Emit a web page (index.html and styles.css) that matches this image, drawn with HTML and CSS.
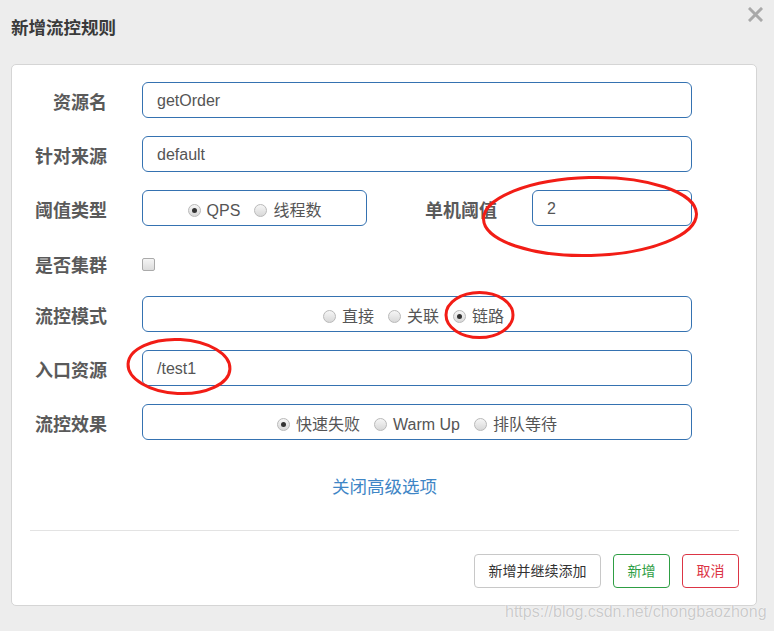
FILE: index.html
```html
<!DOCTYPE html>
<html lang="zh-CN">
<head>
<meta charset="utf-8">
<title>新增流控规则</title>
<link rel="stylesheet" href="styles.css">
</head>
<body>
<div class="page">
  <div class="header">
    <h4 class="title">新增流控规则</h4>
    <svg class="close" width="15" height="15" viewBox="0 0 15 15"><path d="M2 2 L13 13 M13 2 L2 13" stroke="#a9a9a9" stroke-width="3" stroke-linecap="square"/></svg>
  </div>
  <div class="card">
    <div class="form">
      <div class="row">
        <label class="lbl">资源名</label>
        <div class="input wide">getOrder</div>
      </div>
      <div class="row">
        <label class="lbl">针对来源</label>
        <div class="input wide">default</div>
      </div>
      <div class="row">
        <label class="lbl">阈值类型</label>
        <div class="box narrow">
          <span class="opt"><span class="radio on"></span>QPS</span>
          <span class="opt"><span class="radio"></span>线程数</span>
        </div>
        <label class="lbl lbl2">单机阈值</label>
        <div class="input small">2</div>
      </div>
      <div class="row check-row">
        <label class="lbl">是否集群</label>
        <span class="checkbox"></span>
      </div>
      <div class="row">
        <label class="lbl">流控模式</label>
        <div class="box wide mode">
          <span class="opt"><span class="radio"></span>直接</span>
          <span class="opt"><span class="radio"></span>关联</span>
          <span class="opt"><span class="radio on"></span>链路</span>
        </div>
      </div>
      <div class="row">
        <label class="lbl">入口资源</label>
        <div class="input wide">/test1</div>
      </div>
      <div class="row">
        <label class="lbl">流控效果</label>
        <div class="box wide">
          <span class="opt"><span class="radio on"></span>快速失败</span>
          <span class="opt"><span class="radio"></span>Warm Up</span>
          <span class="opt"><span class="radio"></span>排队等待</span>
        </div>
      </div>
    </div>
    <div class="link-row"><a class="link">关闭高级选项</a></div>
    <div class="divider"></div>
    <div class="footer">
      <button class="btn btn-default">新增并继续添加</button>
      <button class="btn btn-success">新增</button>
      <button class="btn btn-danger">取消</button>
    </div>
  </div>
  <div class="watermark">https://blog.csdn.net/chongbaozhong</div>
  <svg class="marks" width="774" height="631" viewBox="0 0 774 631">
    <ellipse cx="590" cy="216.5" rx="106.5" ry="39" transform="rotate(-1.5 590 216.5)" fill="none" stroke="#f21d16" stroke-width="3"/>
    <ellipse cx="479.5" cy="315" rx="33.5" ry="22.5" fill="none" stroke="#f21d16" stroke-width="3"/>
    <ellipse cx="179" cy="366.5" rx="51" ry="27" transform="rotate(3 179 366.5)" fill="none" stroke="#f21d16" stroke-width="3"/>
  </svg>
</div>
</body>
</html>
```
FILE: styles.css
```css
* { box-sizing: border-box; }
html, body {
  margin: 0;
  padding: 0;
  background: #ededed;
  font-family: "Liberation Sans", "Noto Sans CJK SC", sans-serif;
  color: #555;
}
.page {
  position: relative;
  width: 774px;
  height: 631px;
  overflow: hidden;
}
.header {
  display: flex;
  justify-content: space-between;
  align-items: flex-start;
  height: 64px;
  padding: 0 11px 0 11px;
}
.title {
  margin: 16px 0 0 0;
  font-size: 17.5px;
  line-height: 24px;
  font-weight: bold;
  color: #3a3a3a;
}
.close {
  margin-top: 7px;
}
.card {
  margin-left: 11px;
  width: 746px;
  height: 542px;
  background: #fff;
  border: 1px solid #d5d5d5;
  border-radius: 5px;
  padding: 17px 0 0 0;
}
.form {
  display: flex;
  flex-direction: column;
  gap: 18px;
}
.row {
  display: flex;
  align-items: center;
  height: 36px;
}
.lbl {
  width: 95px;
  flex: none;
  text-align: right;
  font-size: 18px;
  font-weight: bold;
  color: #5a5a5a;
  line-height: 24px;
  padding-top: 5px;
  margin-right: 35px;
}
.lbl2 {
  width: 130px;
}
.input, .box {
  height: 36px;
  border: 1px solid #3572b1;
  border-radius: 6px;
  font-size: 16px;
  color: #555;
  flex: none;
}
.input {
  padding-left: 14px;
  line-height: 36px;
}
.wide { width: 550px; }
.narrow { width: 225px; }
.small { width: 160px; }
.box {
  display: flex;
  justify-content: center;
  align-items: center;
  gap: 14px;
  padding-top: 5px;
}
.box.mode { padding-right: 7px; }
.opt {
  display: inline-flex;
  align-items: center;
  gap: 6px;
  white-space: nowrap;
  line-height: 20px;
  color: #555;
}
.radio {
  position: relative;
  width: 13px;
  height: 13px;
  border-radius: 50%;
  border: 1px solid #b9b9b9;
  background: linear-gradient(#f6f6f6, #d8d8d8);
  flex: none;
}
.radio.on::after {
  content: "";
  position: absolute;
  left: 3px;
  top: 3px;
  width: 5px;
  height: 5px;
  border-radius: 50%;
  background: #333;
}
.check-row {
  height: 34px;
  padding-top: 7px;
}
.check-row .lbl {
  padding-top: 3px;
}
.checkbox {
  width: 13px;
  height: 13px;
  border: 1px solid #aaa;
  border-radius: 2px;
  background: linear-gradient(#f5f5f5, #dcdcdc);
  flex: none;
}
.link-row {
  margin-top: 34px;
  padding-left: 320px;
  height: 26px;
  line-height: 26px;
}
.link {
  font-size: 17.5px;
  color: #3f86c6;
  text-decoration: none;
}
.divider {
  margin: 30px 17px 0 18px;
  height: 1px;
  background: #e3e3e3;
}
.footer {
  display: flex;
  justify-content: flex-end;
  gap: 12px;
  margin: 23px 17px 0 0;
}
.btn {
  height: 34px;
  padding: 0 13.5px;
  font-family: "Liberation Sans", "Noto Sans CJK SC", sans-serif;
  font-size: 14px;
  line-height: 32px;
  border-radius: 4px;
  background: #fff;
  border: 1px solid #c8c8c8;
  color: #333;
}
.btn-success {
  border-color: #2e9e44;
  color: #2e9e44;
}
.btn-danger {
  border-color: #dc3545;
  color: #dc3545;
}
.watermark {
  position: absolute;
  left: 505px;
  top: 602px;
  font-size: 16px;
  line-height: 20px;
  color: #cbcbcb;
  text-shadow: 0 0 1px #fff, 0 0 1px #fff;
  white-space: nowrap;
}
.marks {
  position: absolute;
  left: 0;
  top: 0;
  pointer-events: none;
}
```
